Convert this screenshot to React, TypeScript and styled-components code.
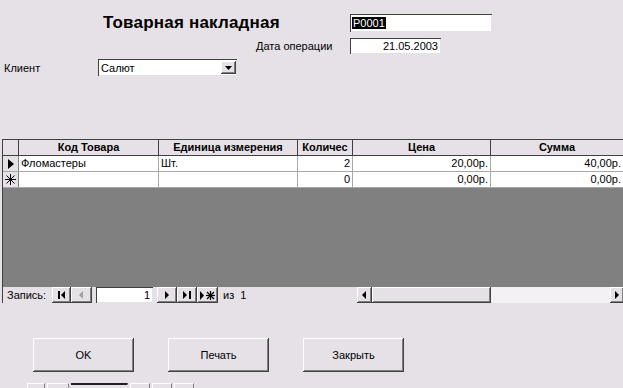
import React from "react";
import styled, { createGlobalStyle, css } from "styled-components";

const FormColor = "#e6e1e6";
const DarkEdge = "#404040";
const Shadow = "#808080";
const GridLine = "#a8a8a8";

const GlobalStyle = createGlobalStyle`
  html, body {
    margin: 0;
    padding: 0;
    background: ${FormColor};
    overflow: hidden;
  }
`;

const raised = css`
  background: ${FormColor};
  box-shadow: inset -1px -1px 0 ${DarkEdge}, inset 1px 1px 0 #ffffff,
    inset -2px -2px 0 ${Shadow};
`;

const sunken = css`
  background: #ffffff;
  box-shadow: inset 1px 1px 0 ${DarkEdge}, inset -1px -1px 0 ${FormColor};
`;

const Form = styled.div`
  width: 623px;
  height: 388px;
  overflow: hidden;
  background: ${FormColor};
  font-family: "Liberation Sans", Arial, sans-serif;
  font-size: 11px;
  color: #000;
  padding-top: 13px;
  box-sizing: border-box;
`;

const FieldRow = styled.div<{ $indent: number; $height: number; $gap?: number }>`
  display: flex;
  align-items: center;
  padding-left: ${(p) => p.$indent}px;
  height: ${(p) => p.$height}px;
  margin-top: ${(p) => p.$gap ?? 0}px;
`;

const Title = styled.div`
  width: 247px;
  font-size: 17px;
  font-weight: bold;
  letter-spacing: 0.2px;
`;

const Label = styled.div<{ $width: number }>`
  width: ${(p) => p.$width}px;
  white-space: nowrap;
`;

const TextBox = styled.div<{ $width: number; $height: number; $align?: string }>`
  ${sunken};
  width: ${(p) => p.$width}px;
  height: ${(p) => p.$height}px;
  box-sizing: border-box;
  padding: 0 3px 0 3px;
  display: flex;
  align-items: center;
  justify-content: ${(p) => (p.$align === "right" ? "flex-end" : "flex-start")};
`;

const Selected = styled.span`
  background: #000;
  color: #fff;
  padding: 0 1px;
  margin-left: -1px;
`;

const Combo = styled(TextBox)`
  padding-right: 1px;
  justify-content: space-between;
`;

const DropButton = styled.div`
  ${raised};
  width: 15px;
  height: 13px;
  display: flex;
  align-items: center;
  justify-content: center;
`;

const Sheet = styled.div`
  margin: 63px 0 0 2px;
  border-left: 1px solid ${DarkEdge};
  border-top: 1px solid ${DarkEdge};
  width: 621px;
`;

const GridRow = styled.div`
  display: grid;
  grid-template-columns: 16px 140px 139px 55px 138px 1fr;
  height: 16px;
`;

const HeadCell = styled.div`
  background: ${FormColor};
  border-right: 1px solid ${DarkEdge};
  border-bottom: 1px solid ${DarkEdge};
  font-weight: bold;
  text-align: center;
  line-height: 15px;
  white-space: nowrap;
  overflow: hidden;
`;

const SelectorCell = styled.div<{ $head?: boolean }>`
  background: ${FormColor};
  border-right: 1px solid ${(p) => (p.$head ? DarkEdge : Shadow)};
  border-bottom: 1px solid ${(p) => (p.$head ? DarkEdge : GridLine)};
  display: flex;
  align-items: center;
  justify-content: center;
`;

const DataCell = styled.div<{ $align?: string }>`
  background: #fff;
  border-right: 1px solid ${GridLine};
  border-bottom: 1px solid ${GridLine};
  padding: 0 2px;
  line-height: 15px;
  text-align: ${(p) => p.$align ?? "left"};
  white-space: nowrap;
  overflow: hidden;
`;

const EmptyArea = styled.div`
  background: #808080;
  height: 99px;
`;

const NavBar = styled.div`
  display: flex;
  align-items: center;
  height: 16px;
  background: ${FormColor};
`;

const NavLabel = styled.span`
  margin: 0 4px 0 4px;
  width: 41px;
`;

const NavButton = styled.div<{ $width: number; $dim?: boolean }>`
  ${raised};
  width: ${(p) => p.$width}px;
  height: 16px;
  display: flex;
  align-items: center;
  justify-content: center;
  color: ${(p) => (p.$dim ? "#a0a0a0" : "#000")};
`;

const NavInput = styled(TextBox)`
  margin: 0 4px 0 4px;
`;

const NavCount = styled.span`
  margin-left: 5px;
  width: 134px;
  word-spacing: 3px;
`;

const ScrollBar = styled.div`
  flex: 1;
  display: flex;
  height: 16px;
  background: #f3f1f3;
`;

const ScrollThumb = styled.div`
  ${raised};
  width: 119px;
  height: 16px;
`;

const ScrollTrack = styled.div`
  flex: 1;
`;

const ButtonRow = styled.div`
  display: flex;
  gap: 34px;
  padding-left: 33px;
  margin-top: 35px;
`;

const CommandButton = styled.div`
  ${raised};
  width: 101px;
  height: 34px;
  display: flex;
  align-items: center;
  justify-content: center;
`;

const GhostStrip = styled.div`
  display: flex;
  margin: 11px 0 0 27px;
  height: 6px;
  gap: 2px;
`;

const GhostPiece = styled.div<{ $width: number; $dark?: boolean }>`
  width: ${(p) => p.$width}px;
  height: 6px;
  border-top: 1px solid ${(p) => (p.$dark ? "#202020" : "#ffffff")};
  border-left: 1px solid ${(p) => (p.$dark ? "#202020" : "#ffffff")};
  border-right: 1px solid ${Shadow};
  box-sizing: border-box;
  background: ${(p) => (p.$dark ? "#202020" : FormColor)};
  height: ${(p) => (p.$dark ? 2 : 6)}px;
`;

type Glyph = "first" | "prev" | "next" | "last" | "new" | "left" | "right" | "down";

const NavGlyph = ({ kind }: { kind: Glyph }) => {
  switch (kind) {
    case "first":
      return (
        <svg width="9" height="8" viewBox="0 0 9 8">
          <rect x="1" y="0" width="2" height="8" fill="currentColor" />
          <path d="M8 0 L4 4 L8 8 Z" fill="currentColor" />
        </svg>
      );
    case "prev":
    case "left":
      return (
        <svg width="5" height="8" viewBox="0 0 5 8">
          <path d="M4 0 L0 4 L4 8 Z" fill="currentColor" />
        </svg>
      );
    case "next":
    case "right":
      return (
        <svg width="5" height="8" viewBox="0 0 5 8">
          <path d="M0 0 L4 4 L0 8 Z" fill="currentColor" />
        </svg>
      );
    case "last":
      return (
        <svg width="9" height="8" viewBox="0 0 9 8">
          <path d="M0 0 L4 4 L0 8 Z" fill="currentColor" />
          <rect x="6" y="0" width="2" height="8" fill="currentColor" />
        </svg>
      );
    case "new":
      return (
        <svg width="15" height="9" viewBox="0 0 15 9">
          <path d="M0 0 L4 4.5 L0 9 Z" fill="currentColor" />
          <g stroke="currentColor" strokeWidth="1.2">
            <line x1="10.5" y1="0" x2="10.5" y2="9" />
            <line x1="6" y1="4.5" x2="15" y2="4.5" />
            <line x1="7" y1="1" x2="14" y2="8" />
            <line x1="14" y1="1" x2="7" y2="8" />
          </g>
        </svg>
      );
    case "down":
      return (
        <svg width="7" height="4" viewBox="0 0 7 4">
          <path d="M0 0 L7 0 L3.5 4 Z" fill="currentColor" />
        </svg>
      );
  }
};

const Asterisk = () => (
  <svg width="11" height="11" viewBox="0 0 11 11">
    <g stroke="#000" strokeWidth="1">
      <line x1="5.5" y1="0" x2="5.5" y2="11" />
      <line x1="0" y1="5.5" x2="11" y2="5.5" />
      <line x1="1.5" y1="1.5" x2="9.5" y2="9.5" />
      <line x1="9.5" y1="1.5" x2="1.5" y2="9.5" />
    </g>
  </svg>
);

const CurrentMark = () => (
  <svg width="6" height="10" viewBox="0 0 6 10">
    <path d="M0 0 L6 5 L0 10 Z" fill="#000" />
  </svg>
);

interface Line {
  product: string;
  unit: string;
  qty: string;
  price: string;
  sum: string;
  isNew?: boolean;
}

const lines: Line[] = [
  { product: "Фломастеры", unit: "Шт.", qty: "2", price: "20,00р.", sum: "40,00р." },
  { product: "", unit: "", qty: "0", price: "0,00р.", sum: "0,00р.", isNew: true },
];

const columns = ["Код Товара", "Единица измерения", "Количес", "Цена", "Сумма"];

const App = () => {
  return (
    <>
      <GlobalStyle />
      <Form>
        <FieldRow $indent={103} $height={20}>
          <Title>Товарная накладная</Title>
          <TextBox $width={142} $height={18}>
            <Selected>P0001</Selected>
          </TextBox>
        </FieldRow>
        <FieldRow $indent={256} $height={16} $gap={5}>
          <Label $width={94}>Дата операции</Label>
          <TextBox $width={91} $height={16} $align="right">
            21.05.2003
          </TextBox>
        </FieldRow>
        <FieldRow $indent={4} $height={17} $gap={5}>
          <Label $width={94}>Клиент</Label>
          <Combo $width={139} $height={17}>
            <span>Салют</span>
            <DropButton>
              <NavGlyph kind="down" />
            </DropButton>
          </Combo>
        </FieldRow>

        <Sheet>
          <GridRow>
            <SelectorCell $head />
            {columns.map((c) => (
              <HeadCell key={c}>{c}</HeadCell>
            ))}
          </GridRow>
          {lines.map((l, i) => (
            <GridRow key={i}>
              <SelectorCell>{l.isNew ? <Asterisk /> : <CurrentMark />}</SelectorCell>
              <DataCell>{l.product}</DataCell>
              <DataCell>{l.unit}</DataCell>
              <DataCell $align="right">{l.qty}</DataCell>
              <DataCell $align="right">{l.price}</DataCell>
              <DataCell $align="right">{l.sum}</DataCell>
            </GridRow>
          ))}
          <EmptyArea />
          <NavBar>
            <NavLabel>Запись:</NavLabel>
            <NavButton $width={19}>
              <NavGlyph kind="first" />
            </NavButton>
            <NavButton $width={21} $dim>
              <NavGlyph kind="prev" />
            </NavButton>
            <NavInput $width={57} $height={16} $align="right">
              1
            </NavInput>
            <NavButton $width={20}>
              <NavGlyph kind="next" />
            </NavButton>
            <NavButton $width={20}>
              <NavGlyph kind="last" />
            </NavButton>
            <NavButton $width={21}>
              <NavGlyph kind="new" />
            </NavButton>
            <NavCount>из 1</NavCount>
            <ScrollBar>
              <NavButton $width={15}>
                <NavGlyph kind="left" />
              </NavButton>
              <ScrollThumb />
              <ScrollTrack />
              <NavButton $width={14}>
                <NavGlyph kind="right" />
              </NavButton>
            </ScrollBar>
          </NavBar>
        </Sheet>

        <ButtonRow>
          <CommandButton>OK</CommandButton>
          <CommandButton>Печать</CommandButton>
          <CommandButton>Закрыть</CommandButton>
        </ButtonRow>

        <GhostStrip>
          <GhostPiece $width={18} />
          <GhostPiece $width={22} />
          <GhostPiece $width={57} $dark />
          <GhostPiece $width={20} />
          <GhostPiece $width={20} />
          <GhostPiece $width={20} />
        </GhostStrip>
      </Form>
    </>
  );
};

export default App;
